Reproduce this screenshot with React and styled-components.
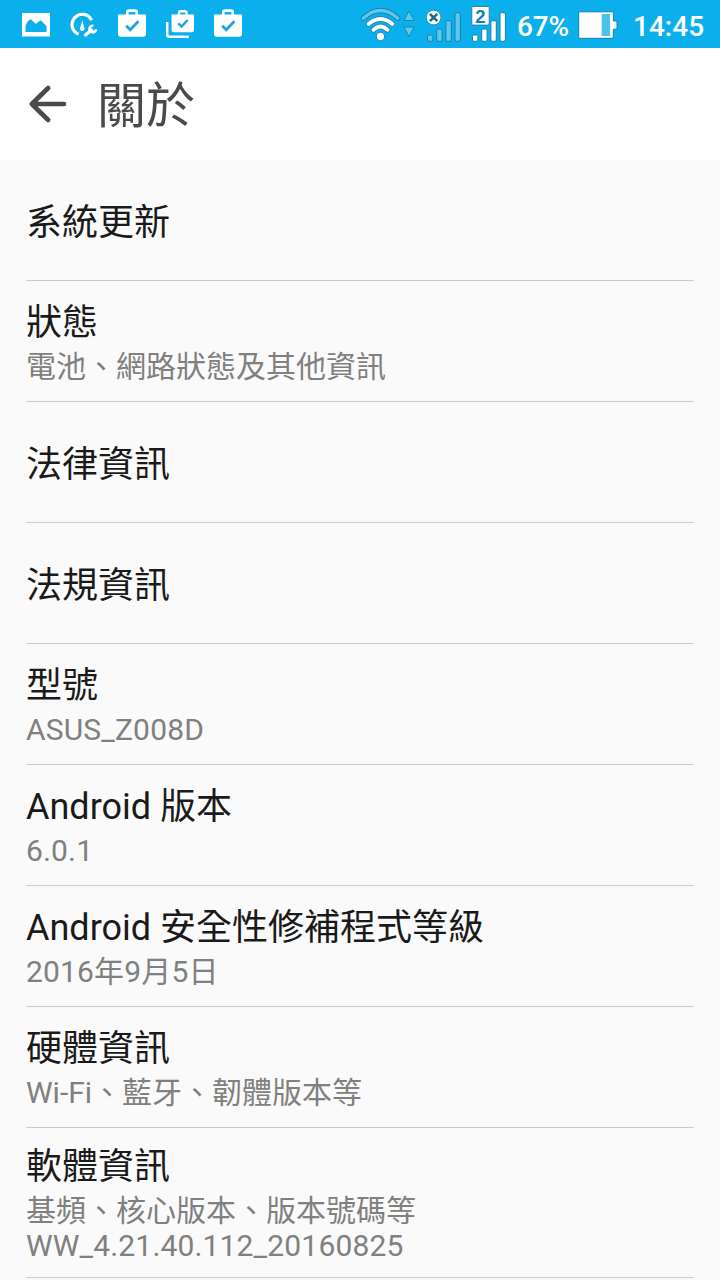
import React from "react";
import styled, {createGlobalStyle} from "styled-components";

const GlobalStyle = createGlobalStyle`
  * {
    box-sizing: border-box;
  }

  body {
    margin: 0;
    background: #fafafa;
    font-family: Roboto, "Noto Sans CJK TC", sans-serif;
  }
`

const Screen = styled.div`
  width: 720px;
  height: 1280px;
  overflow: hidden;
  background: #fafafa;
`

const StatusBar = styled.div`
  display: flex;
  justify-content: space-between;
  height: 48px;
  padding: 0 16px 0 22px;
  background: #0aafec;
  color: #fff;
`

const Notifications = styled.div`
  display: flex;
  gap: 20px;
`

const SystemIcons = styled.div`
  display: flex;
`

const Icon = styled.svg`
  display: block;
  flex: none;
  width: ${props => props.$width}px;
  height: 48px;
  margin-right: ${props => props.$gap || 0}px;
`

const StatusText = styled.span`
  width: ${props => props.$width}px;
  margin-right: ${props => props.$gap || 0}px;
  font-size: 28px;
  font-weight: 500;
  line-height: 53px;
  letter-spacing: ${props => props.$spacing || 0}px;
  white-space: nowrap;
`

const Header = styled.header`
  display: flex;
  align-items: center;
  gap: 30px;
  height: 112px;
  padding-left: 28px;
  background: #fefefe;
`

const BackButton = styled.button`
  width: 39px;
  height: 40px;
  padding: 0;
  border: none;
  background: none;
  cursor: pointer;
`

const PageTitle = styled.h1`
  margin: 0;
  padding-top: 6px;
  color: #4a4a4a;
  font-size: 49px;
  font-weight: 400;
  line-height: 72px;
`

const List = styled.ul`
  margin: 0;
  padding: 0 26px;
  list-style: none;
`

const Row = styled.li`
  display: flex;
  flex-direction: column;
  justify-content: center;
  height: ${props => props.$lines > 1 ? 150 : 121}px;
  padding-top: ${props => props.$lines ? 0 : 6}px;
  border-bottom: 1px solid #cbcbcb;
`

const RowTitle = styled.span`
  color: #1a1a1a;
  font-size: 36px;
  line-height: 51px;
`

const RowSummary = styled.span`
  color: #80807e;
  font-size: 30px;
  line-height: 35px;
  letter-spacing: ${props => props.$numeric ? 0.16 : 0}px;
`

const ITEMS = [
    {title: "系統更新"},
    {title: "狀態", summary: ["電池、網路狀態及其他資訊"]},
    {title: "法律資訊"},
    {title: "法規資訊"},
    {title: "型號", summary: ["ASUS_Z008D"]},
    {title: "Android 版本", summary: ["6.0.1"]},
    {title: "Android 安全性修補程式等級", summary: ["2016年9月5日"]},
    {title: "硬體資訊", summary: ["Wi-Fi、藍牙、韌體版本等"]},
    {title: "軟體資訊", summary: ["基頻、核心版本、版本號碼等", "WW_4.21.40.112_20160825"]},
];

const EDGE = "#1580a8";
const FADED = "#5cc8f0";

const ImageIcon = () => (
    <Icon $width={28} viewBox="0 0 28 48">
        <rect y="13" width="28" height="23.5" fill="#fff"/>
        <path d="M3.5 32V26Q5.5 20.5 8.8 19.3L14 24Q16.5 20.8 19 20.6L24.5 26V32Z" fill="#0aafec"/>
    </Icon>
)

const GaugeIcon = () => (
    <Icon $width={28} viewBox="0 0 28 48">
        <path d="M8.6 34.2A10.3 10.3 0 1 1 21.6 20.2" fill="none" stroke="#fff" strokeWidth="3.2"/>
        <path d="M12.3 20.5L14.4 28A2.3 2.3 0 1 1 10.1 28Z" fill="#fff"/>
        <path d="M15.5 35L21.5 30" stroke="#fff" strokeWidth="3.4" strokeLinecap="round"/>
        <path d="M23.4 25.8A3.3 3.3 0 1 0 26 29.4" fill="none" stroke="#fff" strokeWidth="2.6"/>
    </Icon>
)

const BagIcon = () => (
    <Icon $width={28} viewBox="0 0 28 48">
        <path d="M9.3 15V12.5Q9.3 10.6 11.2 10.6H16.8Q18.7 10.6 18.7 12.5V15" fill="none" stroke="#fff" strokeWidth="2.6"/>
        <path d="M0 14.5H28V34Q28 36.7 25.3 36.7H2.7Q0 36.7 0 34Z" fill="#fff"/>
        <path d="M8.2 25.7L12.3 29.8L20.4 21.3" fill="none" stroke="#1aa3dc" strokeWidth="2.7"/>
    </Icon>
)

const BagStackIcon = () => (
    <Icon $width={28} viewBox="0 0 28 48">
        <path d="M13 15V12.8Q13 11.2 14.6 11.2H18.9Q20.5 11.2 20.5 12.8V15" fill="none" stroke="#fff" strokeWidth="2.4"/>
        <path d="M5.5 14.5H28V30Q28 32.2 25.8 32.2H7.7Q5.5 32.2 5.5 30Z" fill="#fff"/>
        <path d="M12.3 23.3L15.6 26.5L21.6 20" fill="none" stroke="#1aa3dc" strokeWidth="2.4"/>
        <path d="M1.2 22V34.5Q1.2 36.7 3.4 36.7H22.8" fill="none" stroke="#fff" strokeWidth="2.5"/>
    </Icon>
)

const WifiIcon = () => (
    <Icon $width={41} viewBox="0 0 41 48" $gap={2} fill="none" strokeLinecap="round">
        <path d="M3.2 18.2Q20.5 2.7 37.8 18.2" stroke={EDGE} strokeWidth="5.2"/>
        <path d="M3.2 18.2Q20.5 2.7 37.8 18.2" stroke={FADED} strokeWidth="3.4"/>
        <path d="M8.6 24Q20.5 14 32.4 24" stroke={EDGE} strokeWidth="5.4"/>
        <path d="M8.6 24Q20.5 14 32.4 24" stroke="#fff" strokeWidth="3.9"/>
        <path d="M13.5 29.8Q20.5 23.2 27.5 29.8" stroke={EDGE} strokeWidth="5.4"/>
        <path d="M13.5 29.8Q20.5 23.2 27.5 29.8" stroke="#fff" strokeWidth="3.9"/>
        <circle cx="20.5" cy="36.5" r="4.2" fill="#fff" stroke={EDGE} strokeWidth="0.9"/>
    </Icon>
)

const TrafficIcon = () => (
    <Icon $width={13} viewBox="0 0 13 48" $gap={10}>
        <path d="M6 11L11.2 20.5H0.8ZM0.8 27H11.2L6 36.5Z" fill={FADED} stroke={EDGE} strokeWidth="0.9" strokeLinejoin="round"/>
    </Icon>
)

const BARS = [
    {x: 1.5, y: 35},
    {x: 10.7, y: 29},
    {x: 19.9, y: 20.7},
    {x: 29, y: 12.7},
];

const SignalBars = ({color}) => BARS.map(bar => (
    <rect key={bar.x} x={bar.x} y={bar.y} width="5.4" height={41.3 - bar.y} rx="1.4" fill={color} stroke={EDGE} strokeWidth="1"/>
))

const NoSignalIcon = () => (
    <Icon $width={36} viewBox="0 0 36 48" $gap={9}>
        <SignalBars color={FADED}/>
        <circle cx="7.6" cy="17.5" r="7.3" fill="#fff" stroke={EDGE} strokeWidth="0.8"/>
        <path d="M3.9 13.8L11.3 21.2M11.3 13.8L3.9 21.2" stroke="#176f94" strokeWidth="2.6"/>
    </Icon>
)

const SecondSignalIcon = () => (
    <Icon $width={36} viewBox="0 0 36 48" $gap={10}>
        <SignalBars color="#fff"/>
        <rect x="0.8" y="6.5" width="17.4" height="18.6" rx="1" fill="#fff" stroke={EDGE} strokeWidth="0.9"/>
        <text x="9.5" y="22.5" textAnchor="middle" fontSize="18.5" fontWeight="700" fontFamily="Liberation Sans, sans-serif" fill="#1580a8">2</text>
    </Icon>
)

const BatteryIcon = () => (
    <Icon $width={40} viewBox="0 0 40 48" $gap={15}>
        <path d="M0.7 11.8H35.3V21H39V29.2H35.3V38.3H0.7Z" fill="#fff" stroke={EDGE} strokeWidth="1"/>
        <rect x="23.7" y="14" width="8.4" height="22" fill="#4fc0ed"/>
    </Icon>
)

const BackArrow = () => (
    <svg width="39" height="40" viewBox="0 0 39 40" fill="none" stroke="#4a4a4a" strokeWidth="4.6" strokeLinecap="round" strokeLinejoin="round">
        <path d="M20.2 4L3.8 20L20.2 36M4 20H36"/>
    </svg>
)

const App = () => {
    return (
        <Screen>
            <GlobalStyle/>
            <StatusBar>
                <Notifications>
                    <ImageIcon/>
                    <GaugeIcon/>
                    <BagIcon/>
                    <BagStackIcon/>
                    <BagIcon/>
                </Notifications>
                <SystemIcons>
                    <WifiIcon/>
                    <TrafficIcon/>
                    <NoSignalIcon/>
                    <SecondSignalIcon/>
                    <StatusText $width={52} $gap={9} $spacing={-0.2}>67%</StatusText>
                    <BatteryIcon/>
                    <StatusText $width={71}>14:45</StatusText>
                </SystemIcons>
            </StatusBar>

            <Header>
                <BackButton aria-label="返回">
                    <BackArrow/>
                </BackButton>
                <PageTitle>關於</PageTitle>
            </Header>

            <List>
                {ITEMS.map(({title, summary = []}) => (
                    <Row key={title} $lines={summary.length}>
                        <RowTitle>{title}</RowTitle>
                        {summary.map(line => (
                            <RowSummary key={line} $numeric={/\d/.test(line)}>{line}</RowSummary>
                        ))}
                    </Row>
                ))}
            </List>
        </Screen>
    );
}

export default App;
